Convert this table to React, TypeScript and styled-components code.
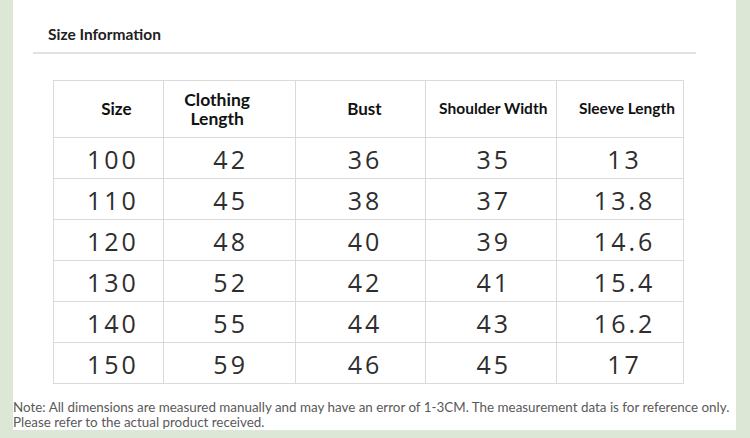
import React from "react";
import styled, { createGlobalStyle } from "styled-components";

const Global = createGlobalStyle`
  html, body { margin: 0; padding: 0; background: #dce8d5; }
  body { width: 750px; height: 438px; overflow: hidden; }
`;

const Page = styled.div`
  width: 750px;
  height: 438px;
  background: #dce8d5;
  display: flex;
  align-items: flex-start;
`;

const Panel = styled.div`
  margin-left: 13px;
  width: 723px;
  height: 430px;
  background: #ffffff;
  display: flex;
  flex-direction: column;
  font-family: Lato, "Open Sans", sans-serif;
`;

const Heading = styled.div`
  margin: 0 40px 0 20px;
  padding: 26px 0 0 15px;
  height: 26px;
  border-bottom: 2px solid #e2e2e2;
  font-size: 15.5px;
  font-weight: 700;
  color: #222;
  line-height: 17px;
`;

const Table = styled.table`
  margin: 26px 0 0 40px;
  border-collapse: collapse;
  table-layout: fixed;
  width: 631px;
`;

const HeadCell = styled.th<{ $w: number; $size: number; $shift?: number }>`
  width: ${(p) => p.$w - 1.5}px;
  height: 56px;
  border: 1.5px solid #dadada;
  padding: 0;
  font-family: Lato, sans-serif;
  font-weight: 700;
  font-size: ${(p) => p.$size}px;
  line-height: 19.5px;
  color: #111;
  text-align: center;
  vertical-align: middle;
  & > span {
    display: inline-block;
    position: relative;
    left: ${(p) => p.$shift ?? 0}px;
  }
`;

const Cell = styled.td<{ $shift?: number }>`
  height: 38px;
  border: 1.5px solid #dadada;
  padding: 2px 0 0 ${(p) => 3 + (p.$shift ?? 0)}px;
  font-family: "Open Sans", sans-serif;
  font-size: 25px;
  font-weight: 400;
  letter-spacing: 3px;
  color: #2e2e2e;
  text-align: center;
  vertical-align: middle;
  line-height: 1;
`;

const Note = styled.div`
  margin-top: auto;
  padding-bottom: 1px;
  font-family: Lato, sans-serif;
  font-size: 13.4px;
  line-height: 14.5px;
  color: #5a5a5a;
  white-space: nowrap;
`;

const columns: { label: React.ReactNode; w: number; size: number; shift?: number; cell?: number }[] = [
  { label: "Size", w: 110, size: 17, shift: 8, cell: 6 },
  { label: <>Clothing<br />Length</>, w: 132, size: 17.5, shift: -12, cell: 0 },
  { label: "Bust", w: 131, size: 17, shift: 4, cell: 6 },
  { label: "Shoulder Width", w: 131, size: 15.5, shift: 2, cell: 2 },
  { label: "Sleeve Length", w: 127, size: 15.5, shift: 7, cell: 6 },
];

const rows = [
  ["100", "42", "36", "35", "13"],
  ["110", "45", "38", "37", "13.8"],
  ["120", "48", "40", "39", "14.6"],
  ["130", "52", "42", "41", "15.4"],
  ["140", "55", "44", "43", "16.2"],
  ["150", "59", "46", "45", "17"],
];

export default function App() {
  return (
    <>
      <Global />
      <Page>
        <Panel>
          <Heading>Size Information</Heading>
          <Table>
            <thead>
              <tr>
                {columns.map((c, i) => (
                  <HeadCell key={i} $w={c.w} $size={c.size} $shift={c.shift}>
                    <span>{c.label}</span>
                  </HeadCell>
                ))}
              </tr>
            </thead>
            <tbody>
              {rows.map((r, i) => (
                <tr key={i}>
                  {r.map((v, j) => (
                    <Cell key={j} $shift={columns[j].cell}>
                      {v}
                    </Cell>
                  ))}
                </tr>
              ))}
            </tbody>
          </Table>
          <Note>
            Note: All dimensions are measured manually and may have an error of 1-3CM. The
            measurement data is for reference only.
            <br />
            Please refer to the actual product received.
          </Note>
        </Panel>
      </Page>
    </>
  );
}
